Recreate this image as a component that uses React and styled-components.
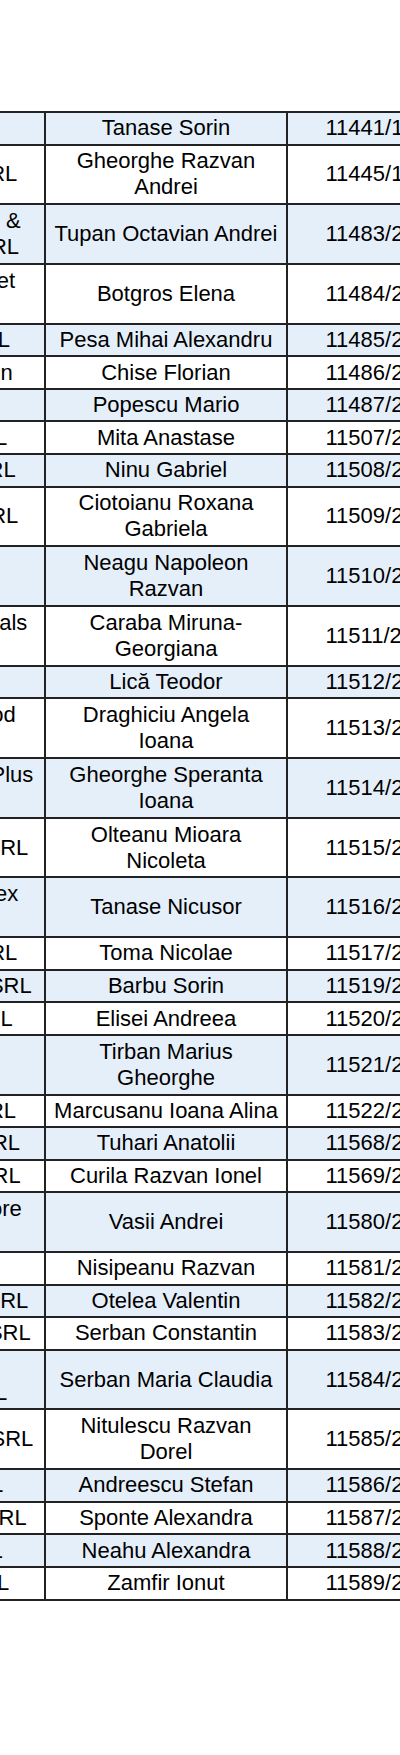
import React from 'react'
import styled, { createGlobalStyle } from 'styled-components'

const Global = createGlobalStyle`
  html, body {
    margin: 0;
    padding: 0;
    background: #fff;
  }
  body {
    font-family: "Liberation Sans", Arial, sans-serif;
    color: #000;
  }
`

const Page = styled.div`
  width: 400px;
  height: 1755px;
  overflow: hidden;
  padding-top: 111px;
  box-sizing: border-box;
`

const Table = styled.div`
  border-top: 2px solid #222;
  width: 520px;
`

const Row = styled.div`
  display: grid;
  grid-template-columns: 46px 242px 1fr;
  box-sizing: border-box;
  height: ${(p) => (p.$tall ? 59.7 : 32.6)}px;
  border-bottom: 2px solid #222;
  background: ${(p) => (p.$shade ? '#e5effa' : '#fff')};
  font-size: 22px;
  line-height: 26px;
`

const FirmCell = styled.div`
  display: flex;
  flex-direction: column;
  justify-content: center;
  border-right: 2px solid #222;
  min-width: 0;
`

const FirmLine = styled.div`
  display: flex;
  justify-content: flex-end;
  height: 26px;
  white-space: nowrap;
  padding-right: ${(p) => p.$pad}px;
`

const NameCell = styled.div`
  display: flex;
  align-items: center;
  justify-content: center;
  text-align: center;
  white-space: pre-line;
  border-right: 2px solid #222;
`

const NumberCell = styled.div`
  display: flex;
  align-items: center;
  padding-left: 37.5px;
  white-space: nowrap;
  overflow: hidden;
`

const rows = [
  { name: 'Tanase Sorin', nr: '11441/1', firm: [] },
  { name: 'Gheorghe Razvan\nAndrei', nr: '11445/1', tall: true, firm: [['SRL', 17.3]] },
  { name: 'Tupan Octavian Andrei', nr: '11483/2', tall: true, firm: [['&', 20.7], ['SRL', 19]] },
  { name: 'Botgros Elena', nr: '11484/2', tall: true, firm: [['et', 15], null] },
  { name: 'Pesa Mihai Alexandru', nr: '11485/2', firm: [['SRL', 10]] },
  { name: 'Chise Florian', nr: '11486/2', firm: [['n', 12.7]] },
  { name: 'Popescu Mario', nr: '11487/2', firm: [] },
  { name: 'Mita Anastase', nr: '11507/2', firm: [['SRL', 7.3]] },
  { name: 'Ninu Gabriel', nr: '11508/2', firm: [['SRL', 15.7]] },
  { name: 'Ciotoianu Roxana\nGabriela', nr: '11509/2', tall: true, firm: [['SRL', 18.3]] },
  { name: 'Neagu Napoleon\nRazvan', nr: '11510/2', tall: true, firm: [] },
  { name: 'Caraba Miruna-\nGeorgiana', nr: '11511/2', tall: true, firm: [['als', 27.3], null] },
  { name: 'Lică Teodor', nr: '11512/2', firm: [] },
  { name: 'Draghiciu Angela\nIoana', nr: '11513/2', tall: true, firm: [['od', 15.7], null] },
  { name: 'Gheorghe Speranta\nIoana', nr: '11514/2', tall: true, firm: [['Plus', 33.3], null] },
  { name: 'Olteanu Mioara\nNicoleta', nr: '11515/2', tall: true, firm: [['SRL', 28.3]] },
  { name: 'Tanase Nicusor', nr: '11516/2', tall: true, firm: [['ex', 18.3], null] },
  { name: 'Toma Nicolae', nr: '11517/2', firm: [['SRL', 17.3]] },
  { name: 'Barbu Sorin', nr: '11519/2', firm: [['SRL', 31.7]] },
  { name: 'Elisei Andreea', nr: '11520/2', firm: [['SRL', 12.7]] },
  { name: 'Tirban Marius\nGheorghe', nr: '11521/2', tall: true, firm: [] },
  { name: 'Marcusanu Ioana Alina', nr: '11522/2', firm: [['SRL', 16]] },
  { name: 'Tuhari Anatolii', nr: '11568/2', firm: [['SRL', 20]] },
  { name: 'Curila Razvan Ionel', nr: '11569/2', firm: [['SRL', 20.7]] },
  { name: 'Vasii Andrei', nr: '11580/2', tall: true, firm: [['ore', 21.7], null] },
  { name: 'Nisipeanu Razvan', nr: '11581/2', firm: [] },
  { name: 'Otelea Valentin', nr: '11582/2', firm: [['SRL', 28.3]] },
  { name: 'Serban Constantin', nr: '11583/2', firm: [['SRL', 30.7]] },
  { name: 'Serban Maria Claudia', nr: '11584/2', tall: true, firm: [null, ['SRL', 7.3]] },
  { name: 'Nitulescu Razvan\nDorel', nr: '11585/2', tall: true, firm: [['SRL', 33.3]] },
  { name: 'Andreescu Stefan', nr: '11586/2', firm: [['SRL', 3.3]] },
  { name: 'Sponte Alexandra', nr: '11587/2', firm: [['SRL', 26.7]] },
  { name: 'Neahu Alexandra', nr: '11588/2', firm: [['SRL', 2.7]] },
  { name: 'Zamfir Ionut', nr: '11589/2', firm: [['SRL', 9.3]] },
]

// the firm column is cut at the left edge, only the line endings show
const FIRM_RIGHT = 44

const App = () => (
  <Page>
    <Global />
    <Table>
      {rows.map((r, i) => (
        <Row key={r.nr} $tall={r.tall} $shade={i % 2 === 0}>
          <FirmCell>
            {r.firm.map((line, j) => (
              <FirmLine key={j} $pad={line ? FIRM_RIGHT - line[1] : 0}>
                {line ? <span>{line[0]}</span> : null}
              </FirmLine>
            ))}
          </FirmCell>
          <NameCell>{r.name}</NameCell>
          <NumberCell>{r.nr}</NumberCell>
        </Row>
      ))}
    </Table>
  </Page>
)

export default App
